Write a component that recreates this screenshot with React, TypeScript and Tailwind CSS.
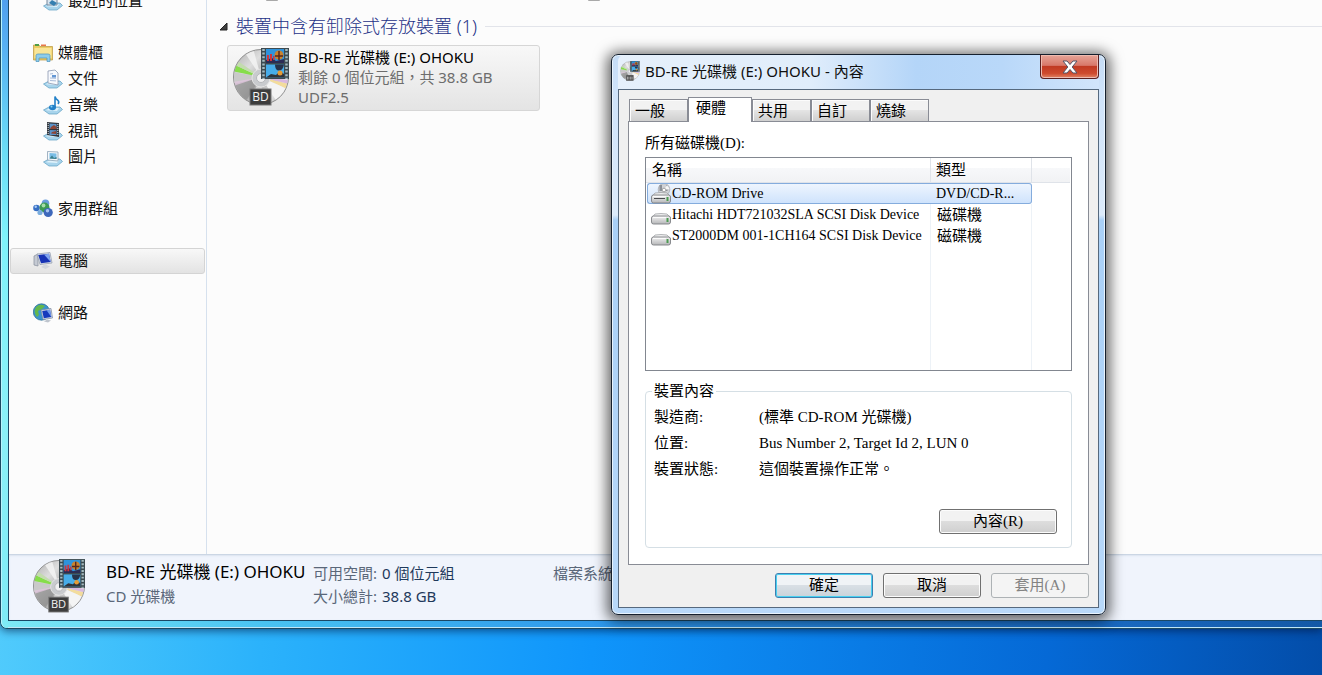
import { useState } from 'react';
import type { ReactNode } from 'react';

function DiscIcon({ className, small }: { className: string; small?: boolean }) {
  return (
    <svg className={className} viewBox="0 0 56 58" aria-hidden="true">
      <defs>
        <linearGradient id="disc" x1="0" y1="0" x2="1" y2="1">
          <stop offset="0" stopColor="#a9a9a9" />
          <stop offset="0.3" stopColor="#dedede" />
          <stop offset="0.55" stopColor="#a9a9a9" />
          <stop offset="0.75" stopColor="#ececec" />
          <stop offset="1" stopColor="#9a9a9a" />
        </linearGradient>
        <clipPath id="discClip">
          <circle cx="28" cy="29" r="27" />
        </clipPath>
      </defs>
      <circle cx="28" cy="29" r="27.5" fill="url(#disc)" stroke="#8d8d8d" strokeWidth="1" />
      <g clipPath="url(#discClip)">
        <path d="M28 29 0 36V50L10 58Z" fill="#8f8f8f" opacity="0.7" />
        <path d="M28 29 0 24V36Z" fill="#c9c9c9" />
        <path d="M28 29 2 17-2 23Z" fill="#86dd4a" />
        <path d="M28 29 6 14 2 17Z" fill="#c3dcae" />
        <path d="M28 29 0 34V38Z" fill="#e0c6dd" opacity="0.8" />
        <path d="M28 29 10 2 20 0Z" fill="#f5f5f5" opacity="0.8" />
        <path d="M28 29 14 58H30Z" fill="#e4e4e4" opacity="0.7" />
        <path d="M28 29 56 36 54 41Z" fill="#f3dc9c" />
        <path d="M28 29 54 41 44 54Z" fill="#f4f4f4" />
        <path d="M28 29 56 32V36Z" fill="#d9b8e0" />
      </g>
      <circle cx="28" cy="30" r="9" fill="#c9cbce" stroke="#e4e4e4" />
      <circle cx="28" cy="30" r="4.5" fill="#f0f0f1" stroke="#b5b7ba" />
      <rect x="28" y="0" width="28" height="31" fill="#3c4a50" />
      <path d="M30.5 1V31M53.5 1V31" stroke="#a3bac0" strokeWidth="2.5" strokeDasharray="2 1.6" />
      <rect x="33" y="1" width="18" height="14" fill="#2e93dc" />
      <path d="M33 12 39 10 43 13 51 11V15H33Z" fill="#2b2c55" />
      <circle cx="46" cy="7" r="4.5" fill="#c9822f" />
      <path d="M46 3V12M42 8H50" stroke="#57281d" strokeWidth="1.5" />
      <path d="M34 7h2v6h-2zM37 6h2v7h-2zM40 8h1.500v4h-1.500z" fill="#cf343c" />
      <rect x="33" y="16.500" width="18" height="13" fill="#47ade9" />
      <path d="M42 16.500h9q-1 6-5 6t-4-6" fill="#27334a" />
      <path d="M33 29.500 38 26l5 1 4-4 4 3v3.500Z" fill="#30343a" />
      <circle cx="47" cy="25" r="2.500" fill="#e59b35" />
      <rect x="17" y="41" width="21" height="16" fill="#3d3d3d" stroke="#777" />
      {!small && (
        <text x="27.5" y="53" textAnchor="middle" fontSize="12" fontFamily="Open Sans" fill="#f4f4f4">
          BD
        </text>
      )}
      {small && <path d="M21 45v9M25 45v9M30 45v9M34 45v9" stroke="#ddd" strokeWidth="2" />}
    </svg>
  );
}

function Tray() {
  return (
    <>
      <path d="M0.5 15 6 12H17L19.500 14.500 14 19H6Z" fill="#a8d4ec" stroke="#5d9dc2" strokeWidth="0.7" />
      <path d="M3 15.200 7 13H16L14 16Z" fill="#dff2fb" />
    </>
  );
}

function NavIcon({ name }: { name: string }) {
  return (
    <svg className="size-5 shrink-0" viewBox="0 0 20 20" aria-hidden="true">
      {name === 'library' && (
        <>
          <path d="M0.500 2H6L7 3.500H19.500V17H0.500Z" fill="#edcd63" stroke="#b9953d" strokeWidth="0.700" />
          <path d="M2 1h4v2H2z" fill="#4f9d45" />
          <path d="M8 1.500h5V3H8z" fill="#e8774a" />
          <path d="M1.500 5H18.500V15H1.500Z" fill="#f9e597" />
          <path d="M3 18.500V12.500Q3 11 5 11H15Q17 11 17 12.500V18.500H14V15H6V18.500Z" fill="#8fcdea" stroke="#4b94bd" strokeWidth="0.700" />
        </>
      )}
      {name === 'document' && (
        <>
          <Tray />
          <path d="M5 2 12 1 15 4V16L5 14Z" fill="#f7f9fd" stroke="#8b98b0" strokeWidth="0.800" />
          <path d="M7 5 10 4.600M7 9l6 .3M7 11.500l6 .4" stroke="#a9bcd9" />
          <path d="M9 6h4v2.500H9z" fill="#6497d4" />
        </>
      )}
      {name === 'music' && (
        <>
          <Tray />
          <ellipse cx="9.5" cy="12.500" rx="3.500" ry="2.800" fill="#2280c8" />
          <path d="M12 12.500V1.500Q12.500 4 15 5.500 16.500 7 15 9" fill="none" stroke="#2280c8" strokeWidth="1.600" />
          <circle cx="8.500" cy="11.500" r="1" fill="#8ad2f5" />
        </>
      )}
      {name === 'video' && (
        <>
          <Tray />
          <path d="M4 1 16 2V16L4 14Z" fill="#33373d" />
          <path d="M5.200 2V14M14.800 3V15" stroke="#d7dde2" strokeDasharray="1 1" />
          <path d="M6.500 2.500 13.500 3V8H6.500ZM6.500 9 13.500 9.300V14H6.500Z" fill="#5c93c8" />
          <path d="M8 6 11 4l2.500 2v2H7zM9 11l4-1v3l-5-.5z" fill="#8e4636" />
        </>
      )}
      {name === 'picture' && (
        <>
          <Tray />
          <path d="M4.500 4.500 15 5V14L4.500 13Z" fill="#f5f8fb" stroke="#8ba2b5" strokeWidth="0.800" />
          <path d="M6.500 6 13.500 6.500V12L6.500 11.500Z" fill="#79bde6" />
          <path d="M6.500 11.500 9 8.500 11 11 13.500 10V12Z" fill="#3b7e89" />
        </>
      )}
      {name === 'recent' && (
        <>
          <Tray />
          <path d="M4 3H14V14H4Z" fill="#d9e5ef" stroke="#76889c" />
          <path d="M6 12 9 9l5 3-3 3z" fill="#357fb0" />
        </>
      )}
      {name === 'homegroup' && (
        <>
          <circle cx="3.500" cy="9" r="3.300" fill="#376fc4" />
          <circle cx="12.500" cy="4.200" r="3.800" fill="#6a9ddd" />
          <circle cx="11.500" cy="8.500" r="5" fill="#3d9a54" />
          <circle cx="15.200" cy="13.500" r="4.600" fill="#3e68bb" />
          <circle cx="7" cy="13.500" r="2.600" fill="#7badde" />
          <circle cx="2.700" cy="7.700" r="1.200" fill="#a8cbf5" />
          <circle cx="10.500" cy="6.500" r="1.900" fill="#a6dea6" />
          <circle cx="14.500" cy="11.700" r="1.700" fill="#a9c4f0" />
        </>
      )}
      {name === 'computer' && (
        <>
          <path d="M1 5 5 3V15L1 14Z" fill="#c5cad3" stroke="#858d9b" strokeWidth="0.700" />
          <path d="M4 3 17 1.500 19 12 7 13.500Z" fill="#dde2ea" stroke="#8e98aa" strokeWidth="0.700" />
          <path d="M5.200 4 16 2.800 17.700 11 8 12.200Z" fill="#1733b5" />
          <path d="M11 3.400 16 2.800 17.700 11Z" fill="#7fa4ee" />
          <path d="M8 16 12 13.300 17 15.500 12.500 18Z" fill="#d2d6dd" />
        </>
      )}
      {name === 'network' && (
        <>
          <circle cx="8.500" cy="9" r="8.200" fill="#3b94cf" stroke="#23658c" strokeWidth="0.700" />
          <path d="M3 4Q7 0 12 3L9 6 5 8 6 12 4 14Q0 9 3 4Z" fill="#64b84c" />
          <path d="M8 7 18 5.500 19.500 15 10 16.500Z" fill="#d9dfe9" stroke="#7a879c" strokeWidth="0.700" />
          <path d="M9.200 8 17 6.800 18.300 14 10.800 15.200Z" fill="#1739bd" />
          <path d="M13.500 7.300 17 6.800 18.300 14Z" fill="#739cea" />
          <path d="M11 18.500 14 16.500 18 17.500 15 19.500Z" fill="#bfc5ce" />
        </>
      )}
    </svg>
  );
}

function DriveIcon({ optical }: { optical?: boolean }) {
  return (
    <svg className="size-5 shrink-0" viewBox="0 0 20 20" aria-hidden="true">
      <defs>
        <linearGradient id="drive" x1="0" y1="0" x2="0" y2="1">
          <stop offset="0" stopColor="#f3f3f3" />
          <stop offset="1" stopColor="#b5b6b8" />
        </linearGradient>
      </defs>
      {optical && (
        <>
          <ellipse cx="13" cy="5.500" rx="5.800" ry="6" fill="#d0d2d6" stroke="#a3a5ab" strokeWidth="0.700" />
          <path d="M8.500 1h2.500v6H8.500zM15 1h1.500v6H15z" fill="#8b9097" />
          <path d="M13 6 16 1 18.500 5Z" fill="#f7f7f7" />
          <circle cx="13" cy="6" r="1.800" fill="#fff" stroke="#888" strokeWidth="0.700" />
        </>
      )}
      <path d="M1 12.500 4 9Q10 8 16 9L19.500 12.500Z" fill="#eeeeef" stroke="#97999c" strokeWidth="0.700" />
      <rect x="0.500" y="11" width="19" height="8" rx="2" fill="url(#drive)" stroke="#7e8084" strokeWidth="0.900" />
      <path d="M2 12.500H15" stroke="#fbfbfb" />
      {optical && <path d="M3 14.500H14" stroke="#4a4c50" />}
      <rect x="15.500" y="13" width="2" height="4" fill="#4d9a52" />
    </svg>
  );
}

interface NavItemProps {
  icon: string;
  label: string;
  child?: boolean;
  active?: boolean;
}

function NavItem({ icon, label, child, active }: NavItemProps) {
  return (
    <a
      href="#"
      className={`flex h-[26px] items-center gap-[5px] rounded-[3px] border text-[15px] leading-5 text-[#101010] ${
        active ? 'border-[#d4d4d4] bg-linear-to-b from-[#f8f8f8] to-[#e3e3e3]' : 'border-transparent'
      } ${child ? 'pl-8' : 'pl-[22px]'}`}
    >
      <NavIcon name={icon} />
      <span className="pb-0.5">{label}</span>
    </a>
  );
}

const ui = "font-['Noto_Sans','Noto_Sans_CJK_TC',sans-serif]";
const tabs = ['一般', '硬體', '共用', '自訂', '燒錄'];
const drives = [
  { name: 'CD-ROM Drive', type: 'DVD/CD-R...', optical: true },
  { name: 'Hitachi HDT721032SLA SCSI Disk Device', type: '磁碟機', optical: false },
  { name: 'ST2000DM 001-1CH164 SCSI Disk Device', type: '磁碟機', optical: false },
];
const facts = [
  ['製造商:', '(標準 CD-ROM 光碟機)'],
  ['位置:', 'Bus Number 2, Target Id 2, LUN 0'],
  ['裝置狀態:', '這個裝置操作正常。'],
];

function PushButton({ children, className, disabled, primary }: { children: ReactNode; className: string; disabled?: boolean; primary?: boolean }) {
  const look = disabled
    ? 'border-[#adb2b5] bg-[#f4f4f4] text-[#838383]'
    : primary
      ? 'border-[#3c7fb1] bg-linear-to-b from-[#f0f3f6] from-50% via-[#d9dfe5] via-50% to-[#c9d3da] text-black shadow-[inset_0_0_0_1px_#48d0f0]'
      : 'border-[#707070] bg-linear-to-b from-[#f2f2f2] from-50% via-[#dddddd] via-50% to-[#cfcfcf] text-black shadow-[inset_0_0_0_1px_#fcfcfc]';
  return (
    <button type="button" disabled={disabled} className={`flex h-[25px] items-center justify-center rounded-[3px] border pb-0.5 ${look} ${className}`}>
      {children}
    </button>
  );
}

function Explorer() {
  return (
    <div className="relative flex min-h-0 flex-1 rounded-bl-[7px] border-b border-l border-[#1b4a63] bg-[linear-gradient(90deg,#7eeaf6_0%,#49c3f2_20%,#2c95ea_47%,#1b6fca_78%,#1459a6_100%)] shadow-[0_2px_8px_rgba(0,20,60,0.6)]">
      <div className="w-[7px] shrink-0 rounded-bl-[6px] border-l border-[#b8f3fc] bg-[linear-gradient(180deg,#4f9fee_0%,#58b2f3_8%,#6bdcf6_24%,#7ff2fb_38%,#8bf0f8_70%,#7eeaf6_100%)]" />
      <div className="flex min-w-0 flex-1 flex-col border-b border-[#bfe6f8] pb-[6px]">
        <div className="flex min-h-0 flex-1 flex-col border-b border-l border-[#1a4866] bg-[#fcfcfc]">
          <div className="flex min-h-0 flex-1 overflow-hidden">
            <nav className="-mt-3 w-[198px] shrink-0 border-r border-[#d6e1ee] px-px">
              <NavItem icon="recent" label="最近的位置" child />
              <div className="mt-[26px]">
                <NavItem icon="library" label="媒體櫃" />
                <NavItem icon="document" label="文件" child />
                <NavItem icon="music" label="音樂" child />
                <NavItem icon="video" label="視訊" child />
                <NavItem icon="picture" label="圖片" child />
              </div>
              <div className="mt-[26px] grid gap-[26px]">
                <NavItem icon="homegroup" label="家用群組" />
                <NavItem icon="computer" label="電腦" active />
                <NavItem icon="network" label="網路" />
              </div>
            </nav>
            <main className="min-w-0 flex-1 pl-3">
              {/* bottom edge of the drives scrolled out of view */}
              <div className="flex h-3 gap-[310px] pl-[47px]">
                <span className="h-px w-3 rounded-b-full bg-[#a9a9a9]" />
                <span className="h-px w-3 rounded-b-full bg-[#a9a9a9]" />
              </div>
              <h2 className="flex h-7 items-center gap-2 text-[18px] leading-7 font-light text-[#1e3287]">
                <svg className="size-[9px]" viewBox="0 0 9 9" aria-hidden="true">
                  <path d="M8 1V8H1Z" fill="#404040" stroke="#222" />
                </svg>
                <span className="whitespace-nowrap">裝置中含有卸除式存放裝置 (1)</span>
                <span className="h-px flex-1 bg-[#e2e4ea]" />
              </h2>
              <section className="mt-[5px] ml-2 flex h-[66px] w-[313px] gap-[9px] rounded-[3px] border border-[#d6d6d6] bg-linear-to-b from-[#f8f8f8] to-[#e4e4e4] pl-[5px]">
                <DiscIcon className="mt-0.5 h-[58px] w-14 shrink-0" />
                <div className="pt-px text-[15px] leading-5 whitespace-nowrap text-[#6d6d6d]">
                  <p className="text-black">BD-RE 光碟機 (E:) OHOKU</p>
                  <p>剩餘 0 個位元組，共 38.8 GB</p>
                  <p>UDF2.5</p>
                </div>
              </section>
            </main>
          </div>
          <footer className="flex h-[66px] shrink-0 border-t border-[#cbd6e4] bg-[#f0f4fc] pt-1 pl-6 whitespace-nowrap shadow-[inset_0_1px_2px_#dbe3ef]">
            <DiscIcon className="h-[54px] w-[52px] shrink-0" />
            <div className="ml-[21px] w-[207px]">
              <p className="text-[17px] leading-[26px] text-black">BD-RE 光碟機 (E:) OHOKU</p>
              <p className="text-[15px] leading-[23px] text-[#5a6779]">CD 光碟機</p>
            </div>
            <dl className="grid w-60 grid-cols-[auto_1fr] content-start gap-x-[5px] pt-[3px] text-[15px] leading-[23px] text-[#5a6779]">
              <dt>可用空間:</dt>
              <dd className="text-[#1e395b]">0 個位元組</dd>
              <dt>大小總計:</dt>
              <dd className="text-[#1e395b]">38.8 GB</dd>
            </dl>
            <p className="pt-[3px] text-[15px] leading-[23px] text-[#5a6779]">檔案系統</p>
          </footer>
        </div>
      </div>
    </div>
  );
}

function PropertiesDialog() {
  const [tab, setTab] = useState('硬體');

  return (
    <div
      role="dialog"
      aria-labelledby="dialog-title"
      className="absolute top-[54px] left-[611px] w-[495px] rounded-[7px] border border-[#15202e] bg-[linear-gradient(180deg,#c5dcf5_0,#cfe3fa_36px,#dcebfb_160px,#a9d0f7_165px,#b8d8f9_100%)] px-[6px] pb-[6px] shadow-[inset_0_0_0_1px_#e8f3fd,0_2px_14px_4px_rgba(0,0,0,0.6)]"
    >
      <header className="flex h-[34px] items-start justify-between rounded-t-md bg-[linear-gradient(90deg,#e6f0fb_0%,#e0edfb_40%,#b4d5f8_62%,#b9d8f9_80%,#d2e5fb_100%)]">
        <div className="flex items-center gap-[5px] pt-1 pl-0.5">
          <DiscIcon className="size-5" small />
          <h1 id="dialog-title" className="text-[15px] leading-6 whitespace-nowrap text-[#101010]">
            BD-RE 光碟機 (E:) OHOKU - 內容
          </h1>
        </div>
        <button
          type="button"
          aria-label="關閉"
          className="flex h-6 w-[59px] items-center justify-center rounded-b-[4px] border border-t-0 border-[#5a2020] bg-[linear-gradient(180deg,#e7a598_0%,#d8786a_45%,#c13a23_50%,#ce4b2e_80%,#e18566_100%)] shadow-[inset_0_0_0_1px_#eebbb0]"
        >
          <svg className="h-[14px] w-4" viewBox="0 0 16 14" aria-hidden="true">
            <path d="M1 1H5L8 4.500 11 1H15L10.200 7 15 13H11L8 9.500 5 13H1L5.800 7Z" fill="#fff" stroke="#545467" />
          </svg>
        </button>
      </header>

      <div className="border border-[#56697e] bg-[#f0f0f0] px-[9px] pt-[7px] pb-[9px] font-['Liberation_Serif','Noto_Sans_CJK_TC',serif] text-[15px] leading-5 text-black">
        <div role="tablist" className="flex h-6 items-end pl-px">
          {tabs.map((name) => (
            <button
              key={name}
              type="button"
              role="tab"
              aria-selected={tab === name}
              onClick={() => setTab(name)}
              className={
                tab === name
                  ? 'relative -mb-px h-[25px] w-16 border border-b-0 border-[#898c95] bg-white pb-1 pl-[7px] text-left'
                  : 'h-[22px] w-[59px] border border-b-0 border-[#898c95] bg-linear-to-b from-[#f2f2f2] from-50% via-[#e4e4e4] via-50% to-[#cfcfcf] pl-[5px] text-left shadow-[inset_1px_1px_0_#fcfcfc]'
              }
            >
              {name}
            </button>
          ))}
        </div>

        <div role="tabpanel" className="border border-[#898c95] bg-white px-4 pt-[11px] pb-4">
          <h2 id="drives">所有磁碟機(D):</h2>
          <div className="mt-1 h-[214px] border border-[#828790] pr-px">
            <table aria-labelledby="drives" className="h-full w-full table-fixed border-separate border-spacing-0 text-left whitespace-nowrap">
              <colgroup>
                <col className="w-[285px]" />
                <col className="w-[101px]" />
                <col />
              </colgroup>
              <thead>
                <tr className="h-[25px] bg-linear-to-b from-white from-40% via-[#f7f8fa] via-40% to-[#f1f2f4]">
                  <th className="border-r border-b border-[#dfe3e9] pl-[6px] font-normal">名稱</th>
                  <th className="border-r border-b border-[#dfe3e9] pl-[5px] font-normal">類型</th>
                  <th className="border-b border-[#dfe3e9]" aria-label="其他" />
                </tr>
              </thead>
              <tbody>
                {drives.map((d, i) => (
                  <tr key={d.name} className="h-[21px]">
                    <td className={i === 0 ? 'p-0 pl-px' : 'border-r border-[#edf2f7] p-0 pl-px'}>
                      <div className={`flex h-[21px] items-center gap-px rounded-l-[3px] border pl-[3px] text-[14px] ${i === 0 ? 'border-r-0 border-[#84acdd] bg-linear-to-b from-[#eef5fe] to-[#cfe3fc]' : 'border-transparent'}`}>
                        <DriveIcon optical={d.optical} />
                        {d.name}
                      </div>
                    </td>
                    <td className={i === 0 ? 'p-0' : 'border-r border-[#edf2f7] p-0'}>
                      <div className={`flex h-[21px] items-center rounded-r-[3px] border pl-[5px] ${i === 0 ? 'border-l-0 border-[#84acdd] bg-linear-to-b from-[#eef5fe] to-[#cfe3fc] text-[14px]' : 'border-transparent'}`}>
                        {d.type}
                      </div>
                    </td>
                    <td />
                  </tr>
                ))}
                <tr>
                  <td className="border-r border-[#edf2f7]" />
                  <td className="border-r border-[#edf2f7]" />
                  <td />
                </tr>
              </tbody>
            </table>
          </div>

          <fieldset className="mt-[10px] rounded-[4px] border border-[#d5dfe5] px-2 pb-[13px]">
            <legend className="-ml-0.5 px-0.5">裝置內容</legend>
            <dl className="grid grid-cols-[105px_1fr] pt-[3px] leading-[26px]">
              {facts.map(([term, value]) => (
                <div key={term} className="contents">
                  <dt>{term}</dt>
                  <dd>{value}</dd>
                </div>
              ))}
            </dl>
            <div className="mt-[27px] flex justify-end pr-[6px]">
              <PushButton className="w-[118px]">內容(R)</PushButton>
            </div>
          </fieldset>
        </div>

        <div className="mt-2 flex justify-end gap-[10px]">
          <PushButton className="w-[98px]" primary>確定</PushButton>
          <PushButton className="w-[98px]">取消</PushButton>
          <PushButton className="w-[98px]" disabled>套用(A)</PushButton>
        </div>
      </div>
    </div>
  );
}

export default function App() {
  return (
    <div className={`relative flex h-screen flex-col overflow-hidden bg-[linear-gradient(95deg,#58d0fc_0%,#2bb2fb_23%,#0f95fb_47%,#0569d6_80%,#034da9_100%)] pb-[46px] ${ui}`}>
      <Explorer />
      <PropertiesDialog />
    </div>
  );
}
